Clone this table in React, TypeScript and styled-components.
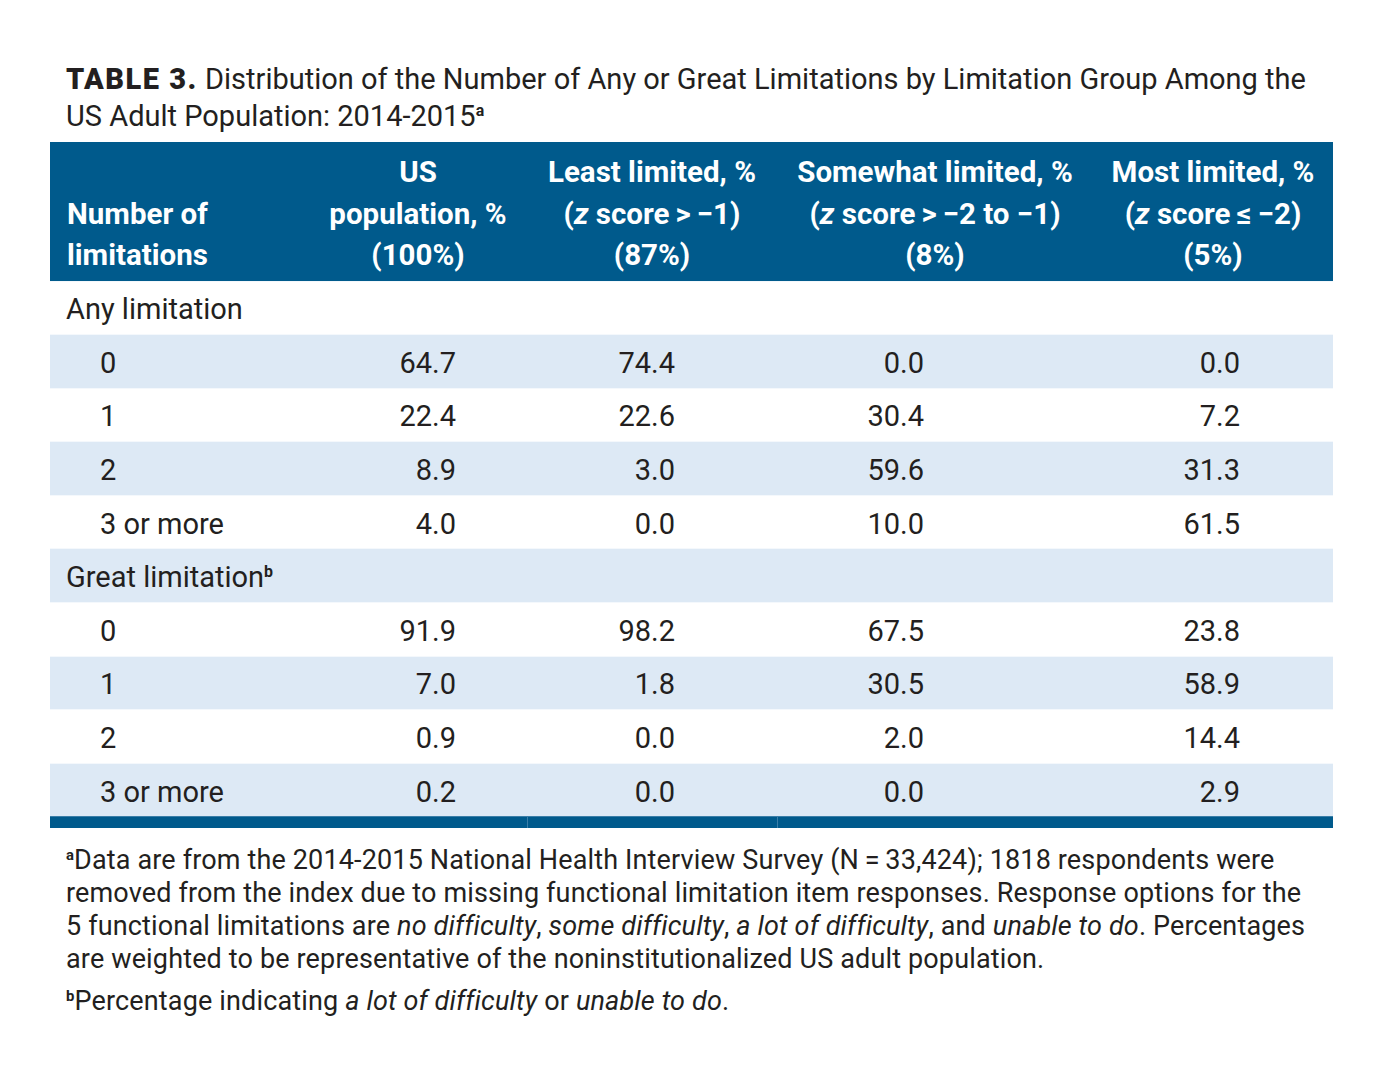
import React from 'react';
import styled, { createGlobalStyle } from 'styled-components';

const GlobalStyle = createGlobalStyle`
  body {
    margin: 0;
    background: #ffffff;
    font-family: Roboto, "Liberation Sans", sans-serif;
    color: #231f20;
  }
`;

const BLUE = '#005a8c';
const LIGHT = '#dde9f5';

const Page = styled.div`
  padding: 61px 50px 40px 50px;
  width: 1283px;
`;

const Title = styled.div`
  padding-left: 16px;
  font-size: 29px;
  line-height: 37px;
  margin-bottom: 7px;
`;

const TitleLabel = styled.span`
  font-weight: 900;
  letter-spacing: 1.5px;
`;

const Sup = styled.sup`
  font-size: 0.55em;
  font-weight: 700;
  vertical-align: 0.6em;
  line-height: 0;
`;

const Table = styled.table`
  width: 1283px;
  border-collapse: collapse;
  table-layout: fixed;
`;

const HeadRow = styled.tr`
  background: ${BLUE};
  height: 139px;
`;

const HeadCell = styled.th<{ $align?: 'left' | 'center' }>`
  color: #ffffff;
  font-weight: 700;
  font-size: 29.5px;
  line-height: 41.5px;
  text-align: ${(p) => p.$align || 'center'};
  vertical-align: bottom;
  padding: 10px 0 4px ${(p) => (p.$align === 'left' ? '17px' : '0')};
  white-space: nowrap;
`;

const Row = styled.tr<{ $shade: boolean }>`
  background: ${(p) => (p.$shade ? LIGHT : '#ffffff')};
  height: 53.6px;
  border-top: 1px solid #f4f8fc;
`;

const LabelCell = styled.td<{ $indent: boolean }>`
  font-size: 29px;
  padding: 3px 0 0 ${(p) => (p.$indent ? '50px' : '16px')};
  white-space: nowrap;
  vertical-align: middle;
`;

const NumCell = styled.td<{ $pad: number }>`
  font-size: 29px;
  text-align: right;
  padding: 3px ${(p) => p.$pad}px 0 0;
  vertical-align: middle;
`;

const FootRow = styled.tr`
  background: ${BLUE};
  height: 11px;
  border-top: 1px solid #3a7ea8;
`;

const FootCell = styled.td<{ $divider?: boolean }>`
  padding: 0;
  border-left: ${(p) => (p.$divider ? '1px solid #3a7ea8' : 'none')};
`;

const Notes = styled.div`
  padding: 16px 0 0 16px;
  font-size: 27px;
  line-height: 33px;
  letter-spacing: 0.15px;
`;

const Note = styled.p`
  margin: 0 0 9px 0;
`;

const colWidths = [259, 218, 250, 316, 240];
const numPads = [71, 102, 169, 93];

type Item =
  | { kind: 'group'; label: React.ReactNode }
  | { kind: 'data'; label: string; values: string[] };

const items: Item[] = [
  { kind: 'group', label: 'Any limitation' },
  { kind: 'data', label: '0', values: ['64.7', '74.4', '0.0', '0.0'] },
  { kind: 'data', label: '1', values: ['22.4', '22.6', '30.4', '7.2'] },
  { kind: 'data', label: '2', values: ['8.9', '3.0', '59.6', '31.3'] },
  { kind: 'data', label: '3 or more', values: ['4.0', '0.0', '10.0', '61.5'] },
  {
    kind: 'group',
    label: (
      <>
        Great limitation<Sup>b</Sup>
      </>
    ),
  },
  { kind: 'data', label: '0', values: ['91.9', '98.2', '67.5', '23.8'] },
  { kind: 'data', label: '1', values: ['7.0', '1.8', '30.5', '58.9'] },
  { kind: 'data', label: '2', values: ['0.9', '0.0', '2.0', '14.4'] },
  { kind: 'data', label: '3 or more', values: ['0.2', '0.0', '0.0', '2.9'] },
];

export default function App() {
  return (
    <Page>
      <GlobalStyle />
      <Title>
        <TitleLabel>TABLE 3.</TitleLabel> Distribution of the Number of Any or Great Limitations by
        Limitation Group Among the US Adult Population: 2014-2015<Sup>a</Sup>
      </Title>

      <Table>
        <colgroup>
          {colWidths.map((w, i) => (
            <col key={i} style={{ width: w }} />
          ))}
        </colgroup>
        <thead>
          <HeadRow>
            <HeadCell $align="left">
              Number of
              <br />
              limitations
            </HeadCell>
            <HeadCell>
              US
              <br />
              population, %
              <br />
              (100%)
            </HeadCell>
            <HeadCell>
              Least limited, %
              <br />
              (<i>z</i> score{'\u2009'}&gt;{'\u2009'}−1)
              <br />
              (87%)
            </HeadCell>
            <HeadCell>
              Somewhat limited, %
              <br />
              (<i>z</i> score{'\u2009'}&gt;{'\u2009'}−2 to −1)
              <br />
              (8%)
            </HeadCell>
            <HeadCell>
              Most limited, %
              <br />
              (<i>z</i> score{'\u2009'}≤{'\u2009'}−2)
              <br />
              (5%)
            </HeadCell>
          </HeadRow>
        </thead>
        <tbody>
          {items.map((item, i) => (
            <Row key={i} $shade={i % 2 === 1}>
              {item.kind === 'group' ? (
                <>
                  <LabelCell $indent={false}>{item.label}</LabelCell>
                  <td colSpan={4} />
                </>
              ) : (
                <>
                  <LabelCell $indent>{item.label}</LabelCell>
                  {item.values.map((v, j) => (
                    <NumCell key={j} $pad={numPads[j]}>
                      {v}
                    </NumCell>
                  ))}
                </>
              )}
            </Row>
          ))}
          <FootRow>
            <FootCell />
            <FootCell />
            <FootCell $divider />
            <FootCell $divider />
            <FootCell />
          </FootRow>
        </tbody>
      </Table>

      <Notes>
        <Note>
          <Sup>a</Sup>Data are from the 2014-2015 National Health Interview Survey (N{'\u2009'}={'\u2009'}33,424);
          1818 respondents were removed from the index due to missing functional limitation item
          responses. Response options for the 5{'\u00a0'}functional limitations are <i>no difficulty</i>,{' '}
          <i>some difficulty</i>, <i>a lot of difficulty</i>, and <i>unable to do</i>. Percentages are
          weighted to be representative of the noninstitutionalized US adult population.
        </Note>
        <Note>
          <Sup>b</Sup>Percentage indicating <i>a lot of difficulty</i> or <i>unable to do</i>.
        </Note>
      </Notes>
    </Page>
  );
}
